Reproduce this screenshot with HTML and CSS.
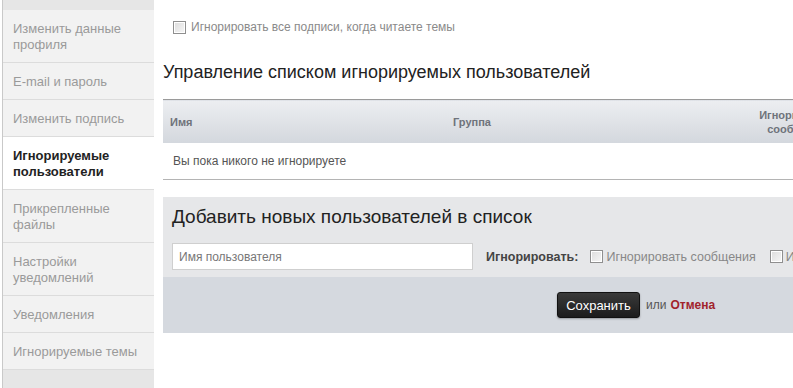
FILE: index.html
```html
<!DOCTYPE html>
<html lang="ru">
<head>
    <meta charset="UTF-8">
    <title>Игнорируемые пользователи</title>
    <link rel="stylesheet" href="styles.css">
</head>
<body>
<div class="page">
    <ul class="side-nav">
        <li class="side-top"></li>
        <li><a href="#">Изменить данные профиля</a></li>
        <li><a href="#">E-mail и пароль</a></li>
        <li><a href="#">Изменить подпись</a></li>
        <li class="active"><a href="#">Игнорируемые пользователи</a></li>
        <li><a href="#">Прикрепленные файлы</a></li>
        <li><a href="#">Настройки уведомлений</a></li>
        <li><a href="#">Уведомления</a></li>
        <li><a href="#">Игнорируемые темы</a></li>
        <li class="side-bottom"></li>
    </ul>

    <div class="main">
        <label class="check-row">
            <input type="checkbox"> Игнорировать все подписи, когда читаете темы
        </label>

        <h2 class="section-title">Управление списком игнорируемых пользователей</h2>

        <table class="ignore-table">
            <colgroup>
                <col class="c-name">
                <col class="c-group">
                <col class="c-msg">
                <col class="c-sig">
            </colgroup>
            <thead>
                <tr>
                    <th>Имя</th>
                    <th>Группа</th>
                    <th class="center">Игнорировать<br>сообщения</th>
                    <th class="center">Игнорировать<br>подписи</th>
                </tr>
            </thead>
            <tbody>
                <tr>
                    <td colspan="4" class="empty">Вы пока никого не игнорируете</td>
                </tr>
            </tbody>
        </table>

        <div class="add-box">
            <h3 class="add-title">Добавить новых пользователей в список</h3>
            <div class="add-row">
                <input type="text" class="user-input" placeholder="Имя пользователя">
                <span class="ignore-label">Игнорировать:</span>
                <label class="opt"><input type="checkbox"> Игнорировать сообщения</label>
                <label class="opt"><input type="checkbox"> Игнорировать подписи</label>
            </div>
        </div>

        <div class="submit-bar">
            <button class="save-btn">Сохранить</button>
            <span class="or">или</span>
            <a href="#" class="cancel">Отмена</a>
        </div>
    </div>
</div>
</body>
</html>
```

FILE: styles.css
```css
html, body {
    margin: 0;
    padding: 0;
    overflow: hidden;
    background: #fff;
    font-family: "Liberation Sans", Arial, sans-serif;
}

.page {
    display: flex;
    align-items: stretch;
    width: 1100px;
    height: 388px;
}

/* Sidebar */
.side-nav {
    list-style: none;
    margin: 0 0 0 2px;
    padding: 0;
    width: 151px;
    flex: none;
    border-left: 1px solid #c9c9c9;
    background: #e6e6e6;
    display: flex;
    flex-direction: column;
}

.side-nav li {
    flex-shrink: 0;
    background: #f2f2f2;
    border-bottom: 1px solid #dcdcdc;
}

.side-nav li a {
    display: block;
    padding: 11px 10px 9px;
    font-size: 13px;
    line-height: 16px;
    color: #9a9a9a;
    text-decoration: none;
}

.side-nav li.side-top {
    height: 10px;
    background: #e6e6e6;
    border-bottom: none;
}

.side-nav li.side-bottom {
    flex: 1;
    background: #e6e6e6;
    border-bottom: none;
}

.side-nav li.active {
    background: #fff;
}

.side-nav li.active a {
    color: #222;
    font-weight: bold;
}

/* Main */
.main {
    margin-left: 9px;
    width: 930px;
}

input[type="checkbox"] {
    appearance: none;
    -webkit-appearance: none;
    width: 13px;
    height: 13px;
    margin: 0 5px 0 0;
    border: 1px solid #8f8f8f;
    background: linear-gradient(135deg, #dcdcdc, #f7f7f7);
    box-shadow: inset 0 0 0 1px #fff;
    flex: none;
}

.check-row {
    display: flex;
    align-items: center;
    margin: 20px 0 0 10px;
    font-size: 12px;
    color: #8a8a8a;
}

.section-title {
    margin: 27px 0 16px;
    font-size: 18px;
    font-weight: normal;
    color: #222;
    line-height: 22px;
}

.ignore-table {
    width: 930px;
    table-layout: fixed;
    border-collapse: collapse;
    border-top: 1px solid #9a9a9a;
    border-bottom: 1px solid #b4b4b4;
}

.c-name { width: 283px; }
.c-group { width: 299px; }
.c-msg { width: 106px; }

.ignore-table th {
    height: 43px;
    padding: 0 7px;
    font-size: 11px;
    font-weight: bold;
    color: #6f737b;
    background: linear-gradient(to bottom, #eceef1, #d3d7dd);
    text-align: left;
    line-height: 14px;
    white-space: nowrap;
}

.ignore-table th.center {
    text-align: center;
}

.ignore-table td.empty {
    height: 36px;
    padding: 0 10px;
    font-size: 12px;
    color: #555;
}

.add-box {
    margin-top: 17px;
    background: #e6e7e9;
    padding: 8px 9px 7px;
}

.add-title {
    margin: 0 0 14px;
    font-size: 19px;
    font-weight: normal;
    color: #222;
    line-height: 24px;
}

.add-row {
    display: flex;
    align-items: center;
}

.user-input {
    width: 301px;
    height: 27px;
    box-sizing: border-box;
    border: 1px solid #cfcfcf;
    padding: 0 6px;
    font-family: "Liberation Sans", Arial, sans-serif;
    font-size: 12px;
    color: #333;
}

.user-input::placeholder {
    color: #777;
}

.ignore-label {
    margin-left: 13px;
    margin-right: 12px;
    font-size: 12.5px;
    font-weight: bold;
    color: #444;
}

.opt {
    display: flex;
    align-items: center;
    margin-right: 14px;
    font-size: 12.5px;
    color: #888;
}

.opt input {
    margin-right: 3px;
}

.submit-bar {
    background: #d5d9df;
    height: 56px;
    display: flex;
    align-items: center;
    padding-left: 394px;
}

.save-btn {
    height: 26px;
    width: 83px;
    border: 1px solid #111;
    border-radius: 3px;
    background: linear-gradient(to bottom, #3a3a3a, #1c1c1c);
    color: #fff;
    font-family: "Liberation Sans", Arial, sans-serif;
    font-size: 13px;
    box-shadow: 0 1px 2px rgba(0, 0, 0, 0.3);
}

.or {
    margin-left: 6px;
    font-size: 12px;
    color: #555;
}

.cancel {
    margin-left: 4px;
    font-size: 12px;
    font-weight: bold;
    color: #a1232b;
    text-decoration: none;
}
```
